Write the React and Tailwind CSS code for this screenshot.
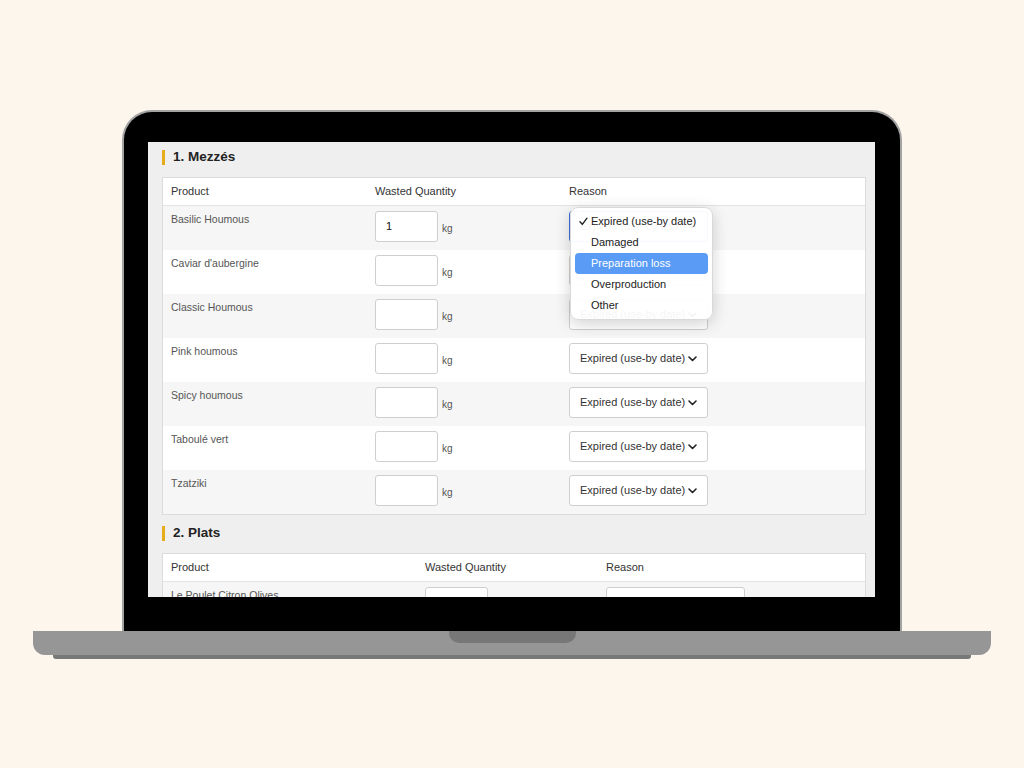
import React from 'react';

const mezzes = [
  'Basilic Houmous',
  "Caviar d'aubergine",
  'Classic Houmous',
  'Pink houmous',
  'Spicy houmous',
  'Taboulé vert',
  'Tzatziki',
];

const reasons = ['Expired (use-by date)', 'Damaged', 'Preparation loss', 'Overproduction', 'Other'];

function Chevron() {
  return (
    <svg width="9" height="6" viewBox="0 0 9 6">
      <path d="M1 1l3.5 3.5L8 1" fill="none" stroke="#222" strokeWidth="1.6" strokeLinecap="round" strokeLinejoin="round" />
    </svg>
  );
}

function Check() {
  return (
    <svg width="9" height="9" viewBox="0 0 9 9">
      <path d="M1 4.8l2.3 2.6L8 1.2" fill="none" stroke="#222" strokeWidth="1.4" strokeLinecap="round" strokeLinejoin="round" />
    </svg>
  );
}

function ReasonSelect({ focused }) {
  return (
    <div
      className={`flex h-[31px] w-[139px] items-center justify-between whitespace-nowrap rounded-[3px] border bg-white pl-[10px] pr-[10px] text-[11px] text-[#333] ${
        focused ? 'border-[#3a6fd8]' : 'border-[#cfcfcf]'
      }`}
    >
      <span>Expired (use-by date)</span>
      <Chevron />
    </div>
  );
}

function QtyInput({ value }) {
  return (
    <div className="flex items-center">
      <div className="flex h-[31px] w-[63px] items-center rounded-[3px] border border-[#cfcfcf] bg-white pl-[10px] text-[11px] text-[#111]">
        {value}
      </div>
      <span className="ml-[4px] mt-[3px] text-[10px] text-[#555]">kg</span>
    </div>
  );
}

function SectionTitle({ children, className }) {
  return (
    <div className={`flex h-[22px] items-center ${className}`}>
      <div className="h-[15px] w-[3px] bg-[#e6ac1c]" />
      <span className="ml-[8px] text-[13.5px] font-bold text-[#222]">{children}</span>
    </div>
  );
}

function WasteTable({ cols, rows, className }) {
  return (
    <div className={`border border-[#dcdcdc] bg-white ${className}`}>
      <div className={`grid h-[28px] items-center border-b border-[#e4e4e4] text-[11px] text-[#333] ${cols}`}>
        <span className="pl-[8px]">Product</span>
        <span className="pl-[9px]">Wasted Quantity</span>
        <span className="pl-[9px]">Reason</span>
      </div>
      {rows.map((name, i) => (
        <div key={name} className={`grid h-[44px] ${cols} ${i % 2 === 0 ? 'bg-[#f5f6f5]' : 'bg-white'}`}>
          <span className="whitespace-nowrap pl-[8px] pt-[6px] text-[10.5px] text-[#555]">{name}</span>
          <div className="pl-[9px] pt-[5px]">
            <QtyInput value={i === 0 && rows.length > 1 ? '1' : ''} />
          </div>
          <div className="pl-[9px] pt-[5px]">
            <ReasonSelect focused={i === 0 && rows.length > 1} />
          </div>
        </div>
      ))}
    </div>
  );
}

function ReasonMenu() {
  return (
    <div className="absolute left-[422px] top-[65px] h-[113px] w-[143px] rounded-[8px] border border-[#d9d9d9] bg-white/95 px-[4px] pt-[3px] shadow-[0_4px_16px_rgba(0,0,0,0.18)]">
      {reasons.map((r, i) => (
        <div
          key={r}
          className={`relative flex h-[21px] items-center whitespace-nowrap rounded-[4px] pl-[16px] text-[11px] ${
            i === 2 ? 'bg-[#5a9bf6] text-white' : 'text-[#222]'
          }`}
        >
          {i === 0 && (
            <span className="absolute left-[4px] top-[6px]">
              <Check />
            </span>
          )}
          {r}
        </div>
      ))}
    </div>
  );
}

export default function App() {
  return (
    <div
      className="flex min-h-screen flex-col items-center bg-[#fdf6ec] pt-[110px]"
      style={{ fontFamily: '"Liberation Sans", Arial, sans-serif' }}
    >
      {/* Lid */}
      <div className="h-[521px] w-[780px] rounded-t-[30px] border-[2px] border-b-0 border-[#a3a3a3] bg-black pl-[24px] pt-[30px]">
        {/* Screen */}
        <div className="relative h-[455px] w-[727px] overflow-hidden bg-[#efefef] pl-[14px] pr-[9px] pt-[4px]">
          <SectionTitle>1. Mezzés</SectionTitle>
          <WasteTable cols="grid-cols-[203px_194px_1fr]" rows={mezzes} className="mt-[9px]" />
          <SectionTitle className="mt-[7px]">2. Plats</SectionTitle>
          <WasteTable cols="grid-cols-[253px_181px_1fr]" rows={['Le Poulet Citron Olives']} className="mt-[9px]" />
          <ReasonMenu />
        </div>
      </div>
      {/* Base */}
      <div className="flex h-[24px] w-[958px] justify-center rounded-b-[12px] bg-[#969696]">
        <div className="h-[12px] w-[127px] rounded-b-[10px] bg-[#777]" />
      </div>
      <div className="h-[4px] w-[918px] rounded-b-[3px] bg-[#787878]" />
    </div>
  );
}
